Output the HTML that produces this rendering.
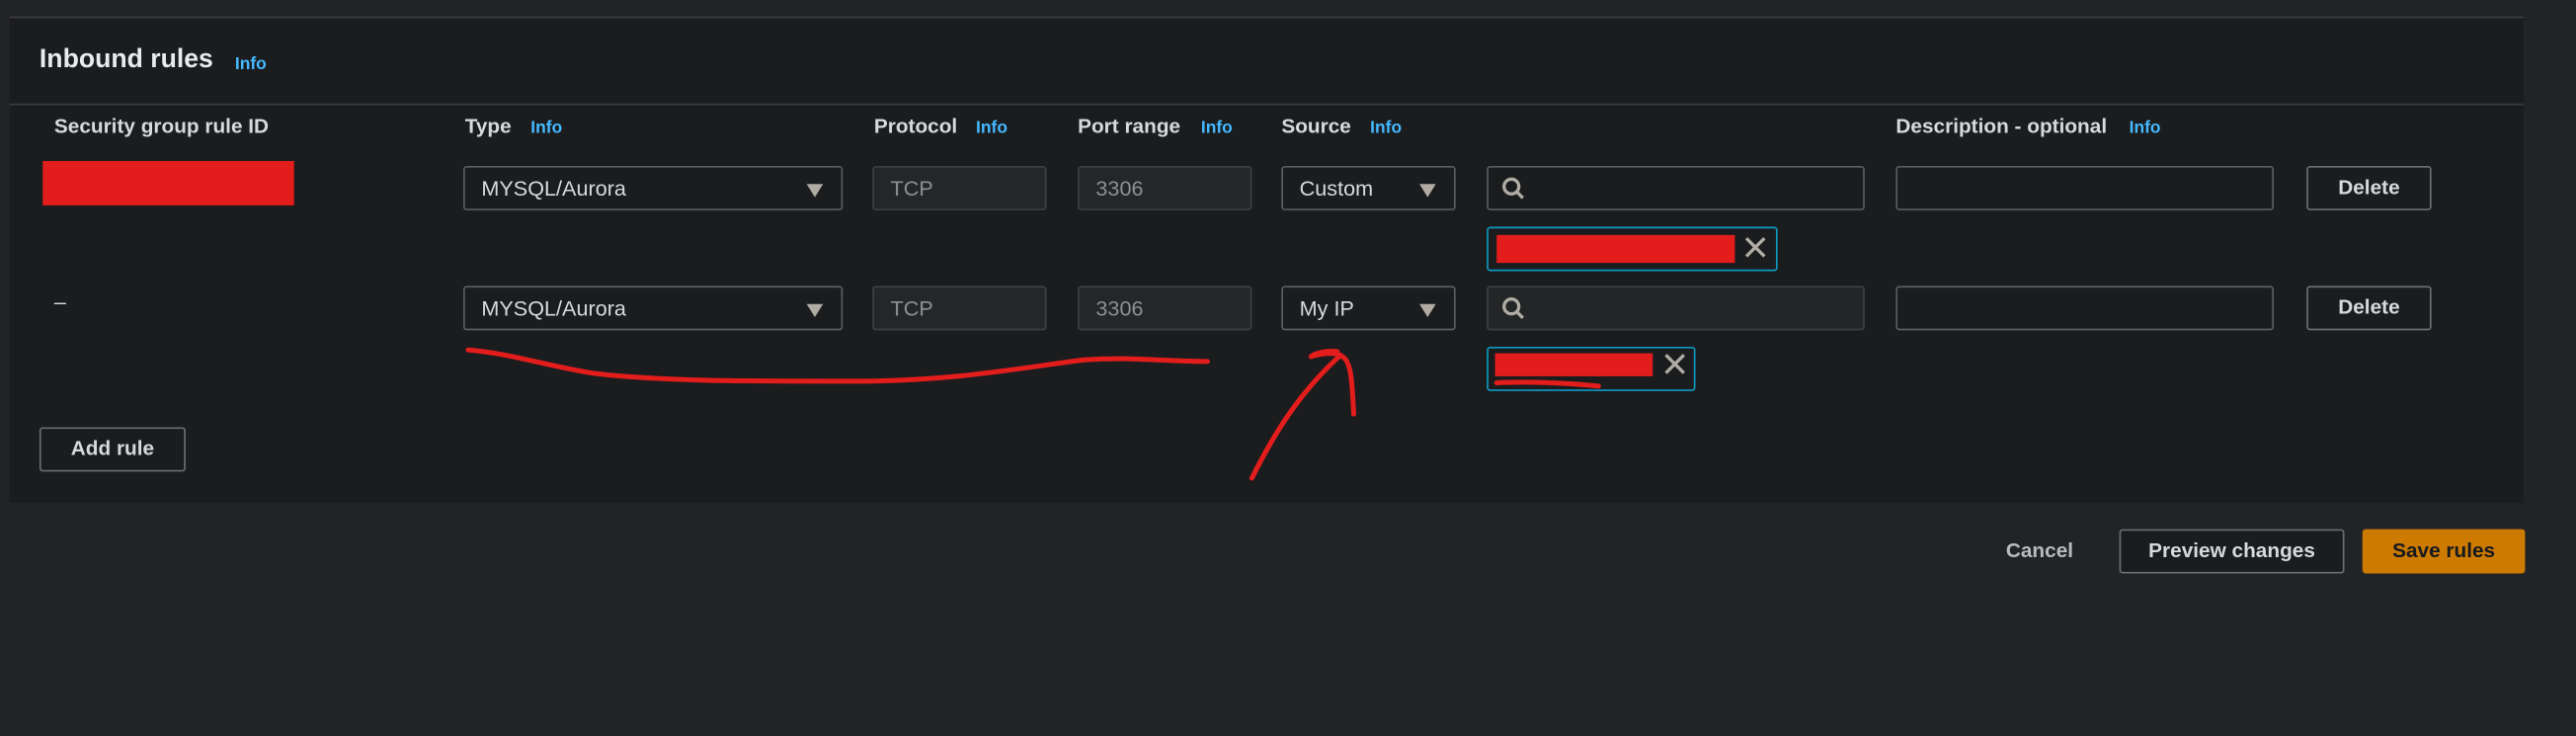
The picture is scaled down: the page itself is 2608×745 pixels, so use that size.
<!DOCTYPE html>
<html><head><meta charset="utf-8"><style>
html,body{margin:0;padding:0;background:#222326;width:2608px;height:744px;overflow:hidden}
#w{position:absolute;left:0;top:0;width:1568px;height:448px;transform:scale(1.66327);transform-origin:0 0;font-family:"Liberation Sans",sans-serif;color:#d5dbdb}
.a{position:absolute}
.panel{left:6px;top:10px;width:1530px;height:295px;background:#1b1c1e;border-top:1px solid #3f4042}
.hd{font-weight:bold;font-size:12.5px;color:#d5dbdb}
.info{font-weight:bold;font-size:10.5px;color:#44b9ff}
.box{box-sizing:border-box;border:1px solid #5a5d61;border-radius:2px;height:27px;font-size:13px;line-height:25px;padding-left:10px}
.dis{background:#242628;border-color:#3d4043;color:#8d9096}
.car{position:absolute;right:11px;top:10px;width:0;height:0;border-left:5px solid transparent;border-right:5px solid transparent;border-top:8px solid #b0aca4}
.btn{box-sizing:border-box;border:1px solid #6b6e72;border-radius:2px;height:27px;font-weight:bold;font-size:12.5px;line-height:25px;text-align:center;color:#d5dbdb}
.tok{box-sizing:border-box;border:1px solid #0d9ac2;border-radius:2px;height:27px}
.red{background:#e31c1c}
</style></head><body><div id="w">
<div class="a panel"></div>
<div class="a" style="left:6px;top:63px;width:1530px;height:1px;background:#3a3b3d"></div>
<div class="a" style="left:24px;top:28px;font-weight:bold;font-size:16px;color:#e9ebed">Inbound rules</div>
<div class="a info" style="left:143px;top:33px">Info</div>

<div class="a hd" style="left:33px;top:70px">Security group rule ID</div>
<div class="a hd" style="left:283px;top:70px">Type</div><div class="a info" style="left:323px;top:72px">Info</div>
<div class="a hd" style="left:532px;top:70px">Protocol</div><div class="a info" style="left:594px;top:72px">Info</div>
<div class="a hd" style="left:656px;top:70px">Port range</div><div class="a info" style="left:731px;top:72px">Info</div>
<div class="a hd" style="left:780px;top:70px">Source</div><div class="a info" style="left:834px;top:72px">Info</div>
<div class="a hd" style="left:1154px;top:70px">Description - optional</div><div class="a info" style="left:1296px;top:72px">Info</div>

<!-- row 1 -->
<div class="a red" style="left:26px;top:98px;width:153px;height:27px"></div>
<div class="a box" style="left:282px;top:101px;width:231px">MYSQL/Aurora<span class="car"></span></div>
<div class="a box dis" style="left:531px;top:101px;width:106px">TCP</div>
<div class="a box dis" style="left:656px;top:101px;width:106px">3306</div>
<div class="a box" style="left:780px;top:101px;width:106px">Custom<span class="car"></span></div>
<div class="a box" style="left:905px;top:101px;width:230px"></div>
<div class="a box" style="left:1154px;top:101px;width:230px"></div>
<div class="a btn" style="left:1404px;top:101px;width:76px">Delete</div>
<div class="a tok" style="left:905px;top:138px;width:177px"></div>
<div class="a red" style="left:911px;top:143px;width:145px;height:17px"></div>

<!-- row 2 -->
<div class="a" style="left:33px;top:176px;font-size:13px">–</div>
<div class="a box" style="left:282px;top:174px;width:231px">MYSQL/Aurora<span class="car"></span></div>
<div class="a box dis" style="left:531px;top:174px;width:106px">TCP</div>
<div class="a box dis" style="left:656px;top:174px;width:106px">3306</div>
<div class="a box" style="left:780px;top:174px;width:106px">My IP<span class="car"></span></div>
<div class="a box" style="left:905px;top:174px;width:230px;background:#232526;border-color:#3d4043"></div>
<div class="a box" style="left:1154px;top:174px;width:230px"></div>
<div class="a btn" style="left:1404px;top:174px;width:76px">Delete</div>
<div class="a tok" style="left:905px;top:211px;width:127px"></div>
<div class="a red" style="left:910px;top:215px;width:96px;height:14px"></div>

<div class="a btn" style="left:24px;top:260px;width:89px">Add rule</div>

<div class="a" style="left:1221px;top:328px;font-weight:bold;font-size:12.5px;color:#b8bcbf">Cancel</div>
<div class="a btn" style="left:1290px;top:322px;width:137px;background:#1b1c1e">Preview changes</div>
<div class="a btn" style="left:1438px;top:322px;width:99px;background:#cc7a00;border-color:#cc7a00;color:#16191f">Save rules</div>

<svg class="a" style="left:0;top:0" width="1568" height="448" viewBox="0 0 1568 448">
<g fill="none" stroke="#b0aca4" stroke-width="2">
<circle cx="920" cy="113.5" r="4.5"/><path d="M923.5 117l3.5 3.5"/>
<circle cx="920" cy="186.5" r="4.5"/><path d="M923.5 190l3.5 3.5"/>
<path d="M1063 145l11 11M1074 145l-11 11"/>
<path d="M1014 216l11 11M1025 216l-11 11"/>
</g>
<g fill="none" stroke="#e31c1c" stroke-width="3" stroke-linecap="round" stroke-linejoin="round">
<path d="M285 213C310 215 330 222 360 227C400 232 450 232 520 232C580 232 620 224 660 219C690 217 710 220 735 220"/>
<path d="M911 233C930 232 955 233 973 235"/>
<path d="M762 291C775 265 790 240 815 217M814 214C808 213 800 215 798 217C805 215 814 214 817 217C823 220 823 235 824 252"/>
</g>
</svg>
</div></body></html>
